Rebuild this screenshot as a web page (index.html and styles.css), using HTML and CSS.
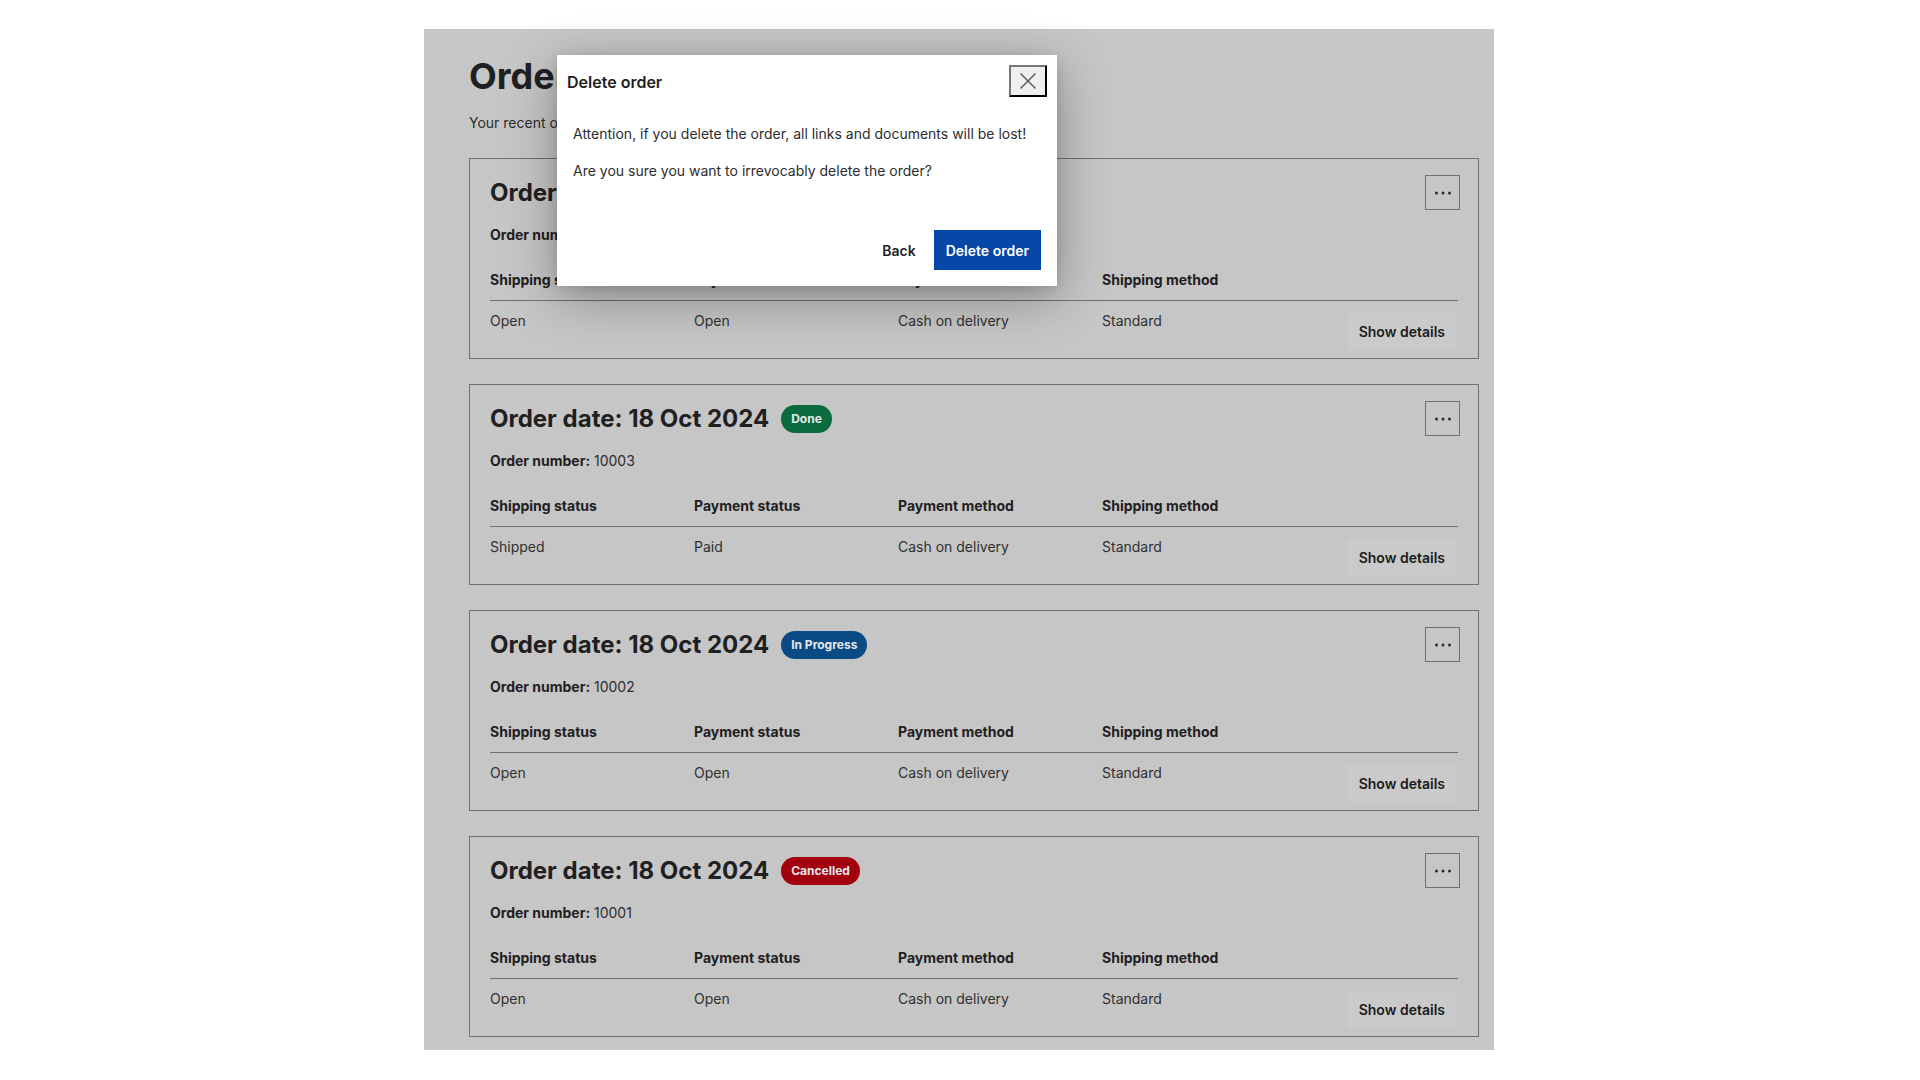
FILE: index.html
```html
<!DOCTYPE html>
<html lang="en">
<head>
<meta charset="utf-8">
<title>Orders</title>
<link rel="stylesheet" href="styles.css">
</head>
<body>
<main class="page">
  <h1 class="page-title">Orders</h1>
  <p class="page-sub">Your recent orders</p>

  <section class="card">
    <div class="card-head">
      <div class="card-title-wrap">
        <h2 class="card-title">Order date: 18 Oct 2024</h2>
        <span class="badge badge-open">Open</span>
      </div>
      <button class="more-btn" aria-label="More actions">
        <svg width="18" height="4" viewBox="0 0 18 4"><circle cx="2.5" cy="2" r="1.5"/><circle cx="9" cy="2" r="1.5"/><circle cx="15.5" cy="2" r="1.5"/></svg>
      </button>
    </div>
    <p class="order-number"><strong>Order number:</strong> 10004</p>
    <div class="grid grid-head">
      <div>Shipping status</div><div>Payment status</div><div>Payment method</div><div>Shipping method</div><div></div>
    </div>
    <div class="grid grid-body">
      <div>Open</div><div>Open</div><div>Cash on delivery</div><div>Standard</div>
      <div class="action"><button class="details-btn">Show details</button></div>
    </div>
  </section>

  <section class="card">
    <div class="card-head">
      <div class="card-title-wrap">
        <h2 class="card-title">Order date: 18 Oct 2024</h2>
        <span class="badge badge-done">Done</span>
      </div>
      <button class="more-btn" aria-label="More actions">
        <svg width="18" height="4" viewBox="0 0 18 4"><circle cx="2.5" cy="2" r="1.5"/><circle cx="9" cy="2" r="1.5"/><circle cx="15.5" cy="2" r="1.5"/></svg>
      </button>
    </div>
    <p class="order-number"><strong>Order number:</strong> 10003</p>
    <div class="grid grid-head">
      <div>Shipping status</div><div>Payment status</div><div>Payment method</div><div>Shipping method</div><div></div>
    </div>
    <div class="grid grid-body">
      <div>Shipped</div><div>Paid</div><div>Cash on delivery</div><div>Standard</div>
      <div class="action"><button class="details-btn">Show details</button></div>
    </div>
  </section>

  <section class="card">
    <div class="card-head">
      <div class="card-title-wrap">
        <h2 class="card-title">Order date: 18 Oct 2024</h2>
        <span class="badge badge-progress">In Progress</span>
      </div>
      <button class="more-btn" aria-label="More actions">
        <svg width="18" height="4" viewBox="0 0 18 4"><circle cx="2.5" cy="2" r="1.5"/><circle cx="9" cy="2" r="1.5"/><circle cx="15.5" cy="2" r="1.5"/></svg>
      </button>
    </div>
    <p class="order-number"><strong>Order number:</strong> 10002</p>
    <div class="grid grid-head">
      <div>Shipping status</div><div>Payment status</div><div>Payment method</div><div>Shipping method</div><div></div>
    </div>
    <div class="grid grid-body">
      <div>Open</div><div>Open</div><div>Cash on delivery</div><div>Standard</div>
      <div class="action"><button class="details-btn">Show details</button></div>
    </div>
  </section>

  <section class="card">
    <div class="card-head">
      <div class="card-title-wrap">
        <h2 class="card-title">Order date: 18 Oct 2024</h2>
        <span class="badge badge-cancelled">Cancelled</span>
      </div>
      <button class="more-btn" aria-label="More actions">
        <svg width="18" height="4" viewBox="0 0 18 4"><circle cx="2.5" cy="2" r="1.5"/><circle cx="9" cy="2" r="1.5"/><circle cx="15.5" cy="2" r="1.5"/></svg>
      </button>
    </div>
    <p class="order-number"><strong>Order number:</strong> 10001</p>
    <div class="grid grid-head">
      <div>Shipping status</div><div>Payment status</div><div>Payment method</div><div>Shipping method</div><div></div>
    </div>
    <div class="grid grid-body">
      <div>Open</div><div>Open</div><div>Cash on delivery</div><div>Standard</div>
      <div class="action"><button class="details-btn">Show details</button></div>
    </div>
  </section>

  <div class="dialog" role="dialog" aria-labelledby="dlg-title">
    <div class="dialog-head">
      <h3 class="dialog-title" id="dlg-title">Delete order</h3>
      <button class="close-btn" aria-label="Close">
        <svg width="18" height="18" viewBox="0 0 18 18"><path d="M1.5 1.5 L16.5 16.5 M16.5 1.5 L1.5 16.5" stroke="#555" stroke-width="1.4" fill="none"/></svg>
      </button>
    </div>
    <div class="dialog-body">
      <p>Attention, if you delete the order, all links and documents will be lost!</p>
      <p>Are you sure you want to irrevocably delete the order?</p>
    </div>
    <div class="dialog-foot">
      <button class="btn-text">Back</button>
      <button class="btn-primary">Delete order</button>
    </div>
  </div>
</main>
</body>
</html>
```

FILE: styles.css
```css
* { box-sizing: border-box; }

html, body {
  margin: 0;
  padding: 0;
  background: #ffffff;
}

body {
  font-family: Inter, "Noto Sans", "Liberation Sans", sans-serif;
  color: #222324;
}

.page {
  position: relative;
  width: 1070px;
  margin: 29px 0 0 424px;
  padding: 25px 15px 13px 45px;
  background: #c6c6c6;
}

.page-title {
  margin: 0;
  font-size: 36px;
  line-height: 44px;
  font-weight: 700;
  color: #1f2021;
}

.page-sub {
  margin: 15px 0 25px;
  font-size: 14px;
  line-height: 20px;
  color: #2c2d2e;
}

.card {
  border: 1px solid #6f7070;
  padding: 16px 20px 8px;
  margin-bottom: 25px;
}
.card:last-of-type { margin-bottom: 0; }

.card-head {
  display: flex;
  align-items: center;
  justify-content: space-between;
  height: 35px;
}

.card-title-wrap {
  display: flex;
  align-items: center;
  gap: 12px;
}

.card-title {
  margin: 0;
  font-size: 24px;
  line-height: 30px;
  font-weight: 700;
  color: #1f2021;
}

.badge {
  display: inline-flex;
  align-items: center;
  height: 28px;
  padding: 0 10px;
  border-radius: 14px;
  font-size: 12px;
  font-weight: 700;
  color: #e6e9ea;
}
.badge-open { background: #5a5c5e; }
.badge-done { background: #0b6a3e; }
.badge-progress { background: #0a4a85; }
.badge-cancelled { background: #a3000f; }

.more-btn {
  width: 35px;
  height: 35px;
  margin-right: -2px;
  padding: 0;
  border: 1px solid #6f7070;
  background: transparent;
  display: flex;
  align-items: center;
  justify-content: center;
  fill: #2a2b2c;
}

.order-number {
  margin: 15px 0 0;
  font-size: 14px;
  line-height: 20px;
  color: #2c2d2e;
}
.order-number strong {
  font-weight: 700;
  color: #1f2021;
}

.grid {
  display: grid;
  grid-template-columns: 204px 204px 204px 204px 1fr;
  font-size: 14px;
  line-height: 20px;
}

.grid-head {
  margin-top: 25px;
  padding-bottom: 10px;
  border-bottom: 1px solid #6f7070;
  font-weight: 700;
  color: #1f2021;
}

.grid-body > div {
  padding-top: 10px;
  color: #2f3031;
}

.grid-body > .action {
  padding-top: 12px;
  display: flex;
  justify-content: flex-end;
}

.details-btn {
  height: 37px;
  padding: 0 12px;
  margin-right: 1px;
  border: 0;
  background: #cacaca;
  font-family: inherit;
  font-size: 14px;
  font-weight: 600;
  color: #1a1b1c;
}

/* dialog */
.dialog {
  position: absolute;
  left: 133px;
  top: 26px;
  width: 500px;
  background: #ffffff;
  box-shadow: 0 12px 48px rgba(0, 0, 0, 0.32), 0 2px 10px rgba(0, 0, 0, 0.12);
}

.dialog-head {
  display: flex;
  align-items: center;
  justify-content: space-between;
  padding: 10px;
}

.dialog-title {
  margin: 2px 0 0;
  font-size: 16px;
  line-height: 22px;
  font-weight: 600;
  color: #1f2021;
}

.close-btn {
  width: 38px;
  height: 32px;
  padding: 0;
  background: #efefef;
  border: 2px solid;
  border-color: #767676 #000000 #000000 #767676;
  display: flex;
  align-items: center;
  justify-content: center;
}

.dialog-body {
  padding: 16px 16px 17px;
}

.dialog-body p {
  margin: 0 0 16px;
  font-size: 14px;
  line-height: 21px;
  color: #2c2d2e;
}

.dialog-foot {
  display: flex;
  justify-content: flex-end;
  gap: 6px;
  padding: 16px;
}

.btn-text,
.btn-primary {
  height: 40px;
  padding: 0 12px;
  border: 0;
  font-family: inherit;
  font-size: 14px;
  font-weight: 600;
}

.btn-text {
  background: transparent;
  color: #222324;
}

.btn-primary {
  background: #0646a6;
  color: #ffffff;
}
```
